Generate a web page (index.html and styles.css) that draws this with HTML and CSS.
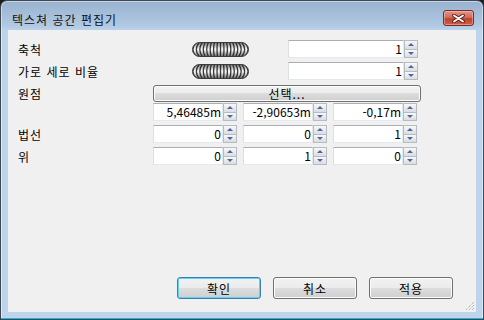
FILE: index.html
```html
<!DOCTYPE html>
<html lang="ko">
<head>
  <meta charset="UTF-8" />
  <title>텍스쳐 공간 편집기</title>
  <link rel="stylesheet" href="styles.css">
</head>
<body>
  <!-- shared slider knob graphic -->
  <svg class="defs" width="0" height="0">
    <defs>
      <linearGradient id="knob-fill" x1="0" y1="0" x2="0" y2="1">
        <stop offset="0" stop-color="#7a7a7a"/>
        <stop offset="0.45" stop-color="#f6f6f6"/>
        <stop offset="0.55" stop-color="#f6f6f6"/>
        <stop offset="1" stop-color="#6c6c6c"/>
      </linearGradient>
      <clipPath id="knob-clip">
        <rect x="0.5" y="0.5" width="56" height="14" rx="7"/>
      </clipPath>
      <symbol id="knob" viewBox="0 0 57 15">
        <rect x="0.5" y="0.5" width="56" height="14" rx="7" fill="url(#knob-fill)"/>
        <g clip-path="url(#knob-clip)" fill="none" stroke="#1a1a1a" stroke-width="1.3" stroke-opacity="0.85">
          <path d="M4.5 0Q-2.7 7.5 4.5 15"/>
          <path d="M7.5 0Q1.2 7.5 7.5 15"/>
          <path d="M10.5 0Q5.1 7.5 10.5 15"/>
          <path d="M13.5 0Q9 7.5 13.5 15"/>
          <path d="M16.5 0Q12.9 7.5 16.5 15"/>
          <path d="M19.5 0Q16.8 7.5 19.5 15"/>
          <path d="M22.5 0Q20.7 7.5 22.5 15"/>
          <path d="M25.5 0Q24.6 7.5 25.5 15"/>
          <path d="M28.5 0L28.5 15"/>
          <path d="M31.5 0Q32.4 7.5 31.5 15"/>
          <path d="M34.5 0Q36.3 7.5 34.5 15"/>
          <path d="M37.5 0Q40.2 7.5 37.5 15"/>
          <path d="M40.5 0Q44.1 7.5 40.5 15"/>
          <path d="M43.5 0Q48 7.5 43.5 15"/>
          <path d="M46.5 0Q51.9 7.5 46.5 15"/>
          <path d="M49.5 0Q55.8 7.5 49.5 15"/>
          <path d="M52.5 0Q59.7 7.5 52.5 15"/>
        </g>
        <rect x="0.5" y="0.5" width="56" height="14" rx="7" fill="none" stroke="#3c3c3c"/>
      </symbol>
    </defs>
  </svg>

  <div class="window">
    <div class="titlebar">
      <span class="title">텍스쳐 공간 편집기</span>
      <span class="close">
        <svg width="13" height="9" viewBox="0 0 13 9">
          <path d="M2 1.5L11 7.5M11 1.5L2 7.5" stroke="#5a1a14" stroke-width="3.6" stroke-linecap="round"/>
          <path d="M2 1.5L11 7.5M11 1.5L2 7.5" stroke="#ffffff" stroke-width="1.8" stroke-linecap="round"/>
        </svg>
      </span>
    </div>

    <div class="client">
      <div class="row">
        <span class="label">축척</span>
        <span class="slot"><svg class="knob" width="57" height="15"><use href="#knob"/></svg></span>
        <div class="spin wide"><span class="field">1</span><span class="arrows"><i class="up"></i><i class="down"></i></span></div>
      </div>
      <div class="row">
        <span class="label">가로 세로 비율</span>
        <span class="slot"><svg class="knob" width="57" height="15"><use href="#knob"/></svg></span>
        <div class="spin wide"><span class="field">1</span><span class="arrows"><i class="up"></i><i class="down"></i></span></div>
      </div>
      <div class="row pick">
        <span class="label">원점</span>
        <button class="btn pick-btn">선택...</button>
      </div>
      <div class="row">
        <span class="label"></span>
        <div class="cells">
          <div class="spin"><span class="field">5,46485m</span><span class="arrows"><i class="up"></i><i class="down"></i></span></div>
          <div class="spin"><span class="field">-2,90653m</span><span class="arrows"><i class="up"></i><i class="down"></i></span></div>
          <div class="spin"><span class="field">-0,17m</span><span class="arrows"><i class="up"></i><i class="down"></i></span></div>
        </div>
      </div>
      <div class="row">
        <span class="label">법선</span>
        <div class="cells">
          <div class="spin"><span class="field">0</span><span class="arrows"><i class="up"></i><i class="down"></i></span></div>
          <div class="spin"><span class="field">0</span><span class="arrows"><i class="up"></i><i class="down"></i></span></div>
          <div class="spin"><span class="field">1</span><span class="arrows"><i class="up"></i><i class="down"></i></span></div>
        </div>
      </div>
      <div class="row">
        <span class="label">위</span>
        <div class="cells">
          <div class="spin"><span class="field">0</span><span class="arrows"><i class="up"></i><i class="down"></i></span></div>
          <div class="spin"><span class="field">1</span><span class="arrows"><i class="up"></i><i class="down"></i></span></div>
          <div class="spin"><span class="field">0</span><span class="arrows"><i class="up"></i><i class="down"></i></span></div>
        </div>
      </div>

      <div class="footer">
        <button class="btn default">확인</button>
        <button class="btn">취소</button>
        <button class="btn">적용</button>
      </div>

      <!-- resize grip -->
      <svg class="grip" width="11" height="11" viewBox="0 0 11 11">
        <path d="M10 2L2 10M10 5L5 10M10 8L8 10" stroke="#a0a0a0" stroke-width="1" stroke-dasharray="1 1"/>
      </svg>
    </div>
  </div>
</body>
</html>
```

FILE: styles.css
```css
html, body {
  margin: 0;
  padding: 0;
}

body {
  font-family: "Noto Sans CJK KR", "Liberation Sans", sans-serif;
  font-size: 12px;
  color: #000;
  background: #1d1d1d;
}

.defs {
  position: absolute;
  width: 0;
  height: 0;
}

.window {
  width: 484px;
  height: 320px;
  box-sizing: border-box;
  display: flex;
  flex-direction: column;
  padding: 0 7px 7px;
  border: 1px solid #3f4853;
  border-radius: 7px 7px 0 0;
  background: linear-gradient(#98b2cf, #b0c8e2 24px, #bcd4ec 30px);
  box-shadow: inset 0 -1px 0 #2ab3d8, inset 0 0 0 1px rgba(255, 255, 255, 0.45);
}

/* title bar */
.titlebar {
  height: 29px;
  display: flex;
  align-items: flex-start;
}

.title {
  padding: 11px 0 0 4px;
  line-height: 16px;
  letter-spacing: 1px;
  color: #111;
}

.close {
  margin: 9px 2px 0 auto;
  width: 31px;
  height: 16px;
  box-sizing: border-box;
  display: flex;
  align-items: center;
  justify-content: center;
  border: 1px solid #7d2a24;
  border-radius: 3px;
  background: linear-gradient(#e09488, #cf6e5e 45%, #bd4230 55%, #cc5f48);
  box-shadow: inset 0 0 0 1px rgba(255, 210, 200, 0.45);
}

/* client area */
.client {
  flex: 1;
  position: relative;
  display: flex;
  flex-direction: column;
  padding: 10px 0 0 10px;
  background: #f0f0f0;
}

.row {
  display: flex;
  align-items: center;
  height: 18px;
  margin-bottom: 4px;
}

.row.pick {
  height: 17px;
  margin: 1px 0 1px;
}

.label {
  width: 135px;
  flex: none;
  letter-spacing: 1px;
}

.slot {
  width: 135px;
  display: flex;
  justify-content: center;
}

.knob {
  display: block;
}

.cells {
  display: flex;
  gap: 6px;
}

.spin {
  display: flex;
  height: 18px;
  width: 84px;
}

.spin.wide {
  width: 130px;
}

.field {
  flex: 1;
  box-sizing: border-box;
  background: #fff;
  border: 1px solid #e3e9ef;
  border-top-color: #abadb3;
  border-left-color: #dbdfe6;
  text-align: right;
  padding-right: 1px;
  line-height: 16px;
  white-space: nowrap;
}

.arrows {
  width: 14px;
  display: flex;
  flex-direction: column;
}

.arrows i {
  flex: 1;
  display: flex;
  align-items: center;
  justify-content: center;
  border: 1px solid #b6bcc4;
  background: linear-gradient(#f8f8f8, #dcdcdc);
}

.arrows i + i {
  border-top: none;
}

.arrows i::after {
  content: "";
  border-left: 3px solid transparent;
  border-right: 3px solid transparent;
}

.arrows .up::after {
  border-bottom: 3px solid #4a66aa;
}

.arrows .down::after {
  border-top: 3px solid #4a66aa;
}

/* buttons */
.btn {
  box-sizing: border-box;
  padding: 0;
  font: inherit;
  letter-spacing: 1px;
  color: #000;
  border: 1px solid #707070;
  border-radius: 3px;
  background: linear-gradient(#f2f2f2, #ebebeb 50%, #dddddd 50%, #cfcfcf);
  box-shadow: inset 0 0 0 1px #fcfcfc;
}

.btn.default {
  border-color: #3c7fb1;
  box-shadow: inset 0 0 0 1px #61d2f7;
}

.pick-btn {
  width: 268px;
  height: 17px;
  line-height: 14px;
}

.footer {
  margin-top: auto;
  display: flex;
  justify-content: flex-end;
  gap: 12px;
  padding: 0 23px 13px 0;
}

.footer .btn {
  width: 84px;
  height: 22px;
}

.grip {
  position: absolute;
  right: 1px;
  bottom: 1px;
}
```
